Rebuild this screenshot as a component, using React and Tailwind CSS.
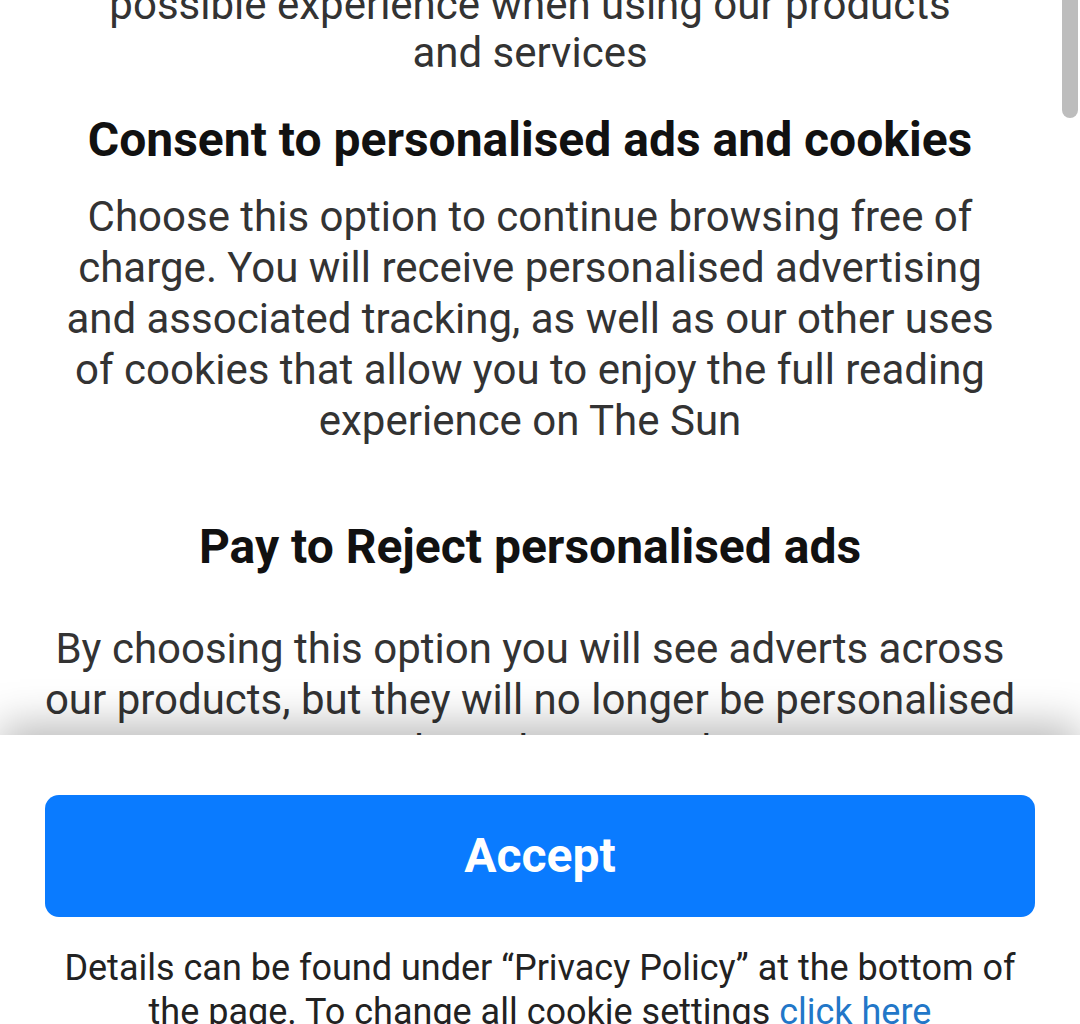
import React from 'react';

const font = { fontFamily: 'Roboto, "Noto Sans", Arial, sans-serif' };

export default function App() {
  return (
    <div className="relative flex h-[1024px] w-[1080px] flex-col overflow-hidden bg-white" style={font}>
      <div className="flex-1 overflow-hidden pl-[20px] pr-[40px] text-center">
        <p className="mt-[-19px] whitespace-nowrap text-[42px] leading-[48px] text-[#333333]">
          possible experience when using our products
          <br />
          and services
        </p>

        <h2 className="mt-[38px] whitespace-nowrap text-[48px] font-bold leading-[50px] text-[#111111]">
          Consent to personalised ads and cookies
        </h2>
        <p className="mt-[26px] whitespace-nowrap text-[42px] leading-[51px] text-[#333333]">
          Choose this option to continue browsing free of
          <br />
          charge. You will receive personalised advertising
          <br />
          and associated tracking, as well as our other uses
          <br />
          of cookies that allow you to enjoy the full reading
          <br />
          experience on The Sun
        </p>

        <h2 className="mt-[76px] whitespace-nowrap text-[48px] font-bold leading-[50px] text-[#111111]">
          Pay to Reject personalised ads
        </h2>
        <p className="mt-[51px] whitespace-nowrap text-[42px] leading-[51px] text-[#333333]">
          By choosing this option you will see adverts across
          <br />
          our products, but they will no longer be personalised
          <br />
          to you based on your data
        </p>
      </div>

      <div className="relative z-10 h-[289px] shrink-0 bg-white px-[45px] pt-[60px] shadow-[0_-10px_40px_rgba(0,0,0,0.28)]">
        <button className="flex h-[122px] w-full items-center justify-center rounded-[14px] bg-[#0a7bff] text-[48px] font-bold text-white">
          Accept
        </button>
        <p className="mt-[29px] whitespace-nowrap text-center text-[36px] leading-[44px] text-[#222222]">
          Details can be found under “Privacy Policy” at the bottom of
          <br />
          the page. To change all cookie settings <span className="text-[#2277c8]">click here</span>
        </p>
      </div>

      <div className="absolute right-[2px] top-0 z-20 h-[118px] w-[16px] rounded-b-full bg-[#bdbdbd]" />
    </div>
  );
}
